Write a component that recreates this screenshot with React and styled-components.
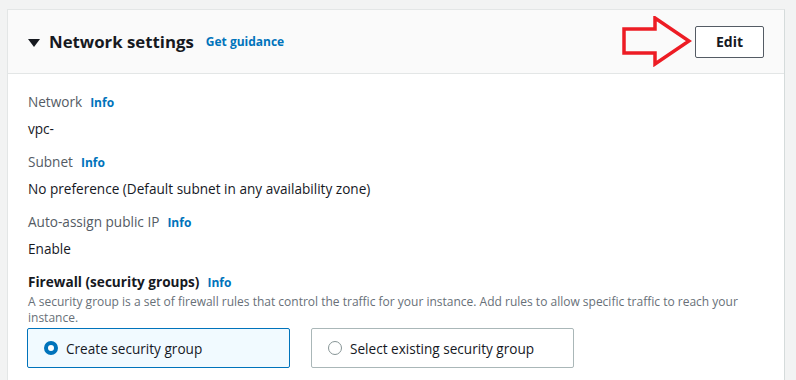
import React from "react";
import styled, { createGlobalStyle } from "styled-components";

const Global = createGlobalStyle`
  body {
    margin: 0;
    background: #f2f3f3;
    font-family: "Open Sans", "Noto Sans", sans-serif;
    color: #16191f;
  }
`;

const Page = styled.div`
  padding: 9px 11px 0 7px;
`;

const Card = styled.section`
  background: #fff;
  border: 1px solid #e3e6e6;
  border-right-color: #d5dbdb;
`;

const Header = styled.header`
  height: 63px;
  display: flex;
  align-items: center;
  padding: 0 20px;
  background: #fafafa;
  border-bottom: 1px solid #e3e6e6;
`;

const Caret = styled.span`
  width: 0;
  height: 0;
  border-left: 6px solid transparent;
  border-right: 6px solid transparent;
  border-top: 8px solid #16191f;
  margin: 2px 9px 0 0;
`;

const Title = styled.h2`
  margin: 0;
  font-size: 16.8px;
  font-weight: 700;
  line-height: 22px;
`;

const Link = styled.a`
  color: #0073bb;
  font-weight: 700;
  font-size: 12px;
  margin-left: ${(p) => p.gap || "8px"};
  text-decoration: none;
`;

const Actions = styled.div`
  margin-left: auto;
  display: flex;
  align-items: center;
  gap: 3px;
`;

const EditButton = styled.button`
  width: 69px;
  height: 32px;
  background: #fff;
  border: 1px solid #545b64;
  border-radius: 2px;
  font-family: inherit;
  font-size: 14px;
  font-weight: 700;
  color: #16191f;
`;

const Body = styled.div`
  padding: 17px 20px 20px;
`;

const Field = styled.div`
  margin-bottom: 11px;
`;

const Label = styled.div`
  display: flex;
  align-items: baseline;
  font-size: 13.6px;
  line-height: 22px;
  color: ${(p) => (p.strong ? "#16191f" : "#545b64")};
  font-weight: ${(p) => (p.strong ? 700 : 400)};
  margin: ${(p) => (p.strong ? "3px 0 0" : "0 0 4px")};
`;

const Value = styled.div`
  font-size: 13.6px;
  line-height: 22px;
`;

const Hint = styled.div`
  font-size: 12px;
  line-height: 16px;
  color: #687078;
  max-width: 712px;
`;

const Tiles = styled.div`
  display: flex;
  gap: 21px;
  margin-top: 2px;
  margin-left: -1px;
`;

const Tile = styled.label`
  width: 263px;
  height: 40px;
  box-sizing: border-box;
  display: flex;
  align-items: center;
  padding-left: 16px;
  gap: 8px;
  font-size: 13.6px;
  border: 1px solid ${(p) => (p.checked ? "#0073bb" : "#aab7b8")};
  background: ${(p) => (p.checked ? "#f1faff" : "#fff")};
  border-radius: 2px;
`;

const Radio = styled.span`
  width: 14px;
  height: 14px;
  box-sizing: border-box;
  border-radius: 50%;
  border: ${(p) => (p.checked ? "4px solid #0073bb" : "1px solid #879596")};
  background: #fff;
`;

const Arrow = () => (
  <svg width="70" height="51" viewBox="0 0 70 51">
    <path
      d="M2 13 H33 V2 L67 25 L33 48 V37 H2 Z"
      fill="none"
      stroke="#ed1c24"
      strokeWidth="3.5"
      strokeLinejoin="miter"
    />
  </svg>
);

export default function App() {
  return (
    <Page>
      <Global />
      <Card>
        <Header>
          <Caret />
          <Title>Network settings</Title>
          <Link gap="12px">Get guidance</Link>
          <Actions>
            <Arrow />
            <EditButton>Edit</EditButton>
          </Actions>
        </Header>
        <Body>
          <Field>
            <Label>
              Network<Link>Info</Link>
            </Label>
            <Value>vpc-</Value>
          </Field>
          <Field>
            <Label>
              Subnet<Link>Info</Link>
            </Label>
            <Value>No preference (Default subnet in any availability zone)</Value>
          </Field>
          <Field>
            <Label>
              Auto-assign public IP<Link>Info</Link>
            </Label>
            <Value>Enable</Value>
          </Field>
          <Label strong>
            Firewall (security groups)<Link>Info</Link>
          </Label>
          <Hint>
            A security group is a set of firewall rules that control the traffic for your instance. Add rules to allow
            specific traffic to reach your instance.
          </Hint>
          <Tiles>
            <Tile checked>
              <Radio checked />
              Create security group
            </Tile>
            <Tile>
              <Radio />
              Select existing security group
            </Tile>
          </Tiles>
        </Body>
      </Card>
    </Page>
  );
}
